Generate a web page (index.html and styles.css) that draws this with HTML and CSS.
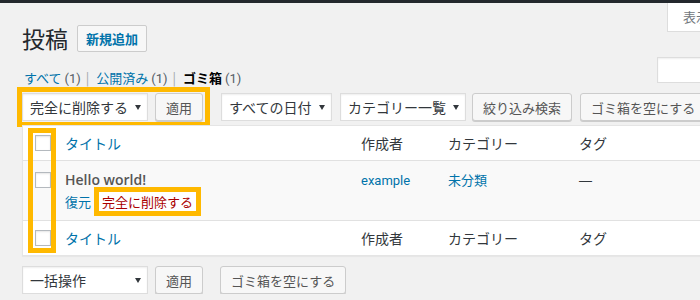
FILE: index.html
```html
<!DOCTYPE html>
<html lang="ja">
<head>
    <meta charset="utf-8">
    <title>投稿 ‹ ゴミ箱</title>
    <link rel="stylesheet" href="styles.css">
</head>
<body>
<div class="adminbar"></div>

<div class="page">
    <div class="page-head">
        <div class="head-left">
            <div class="title-row">
                <h1 class="page-title">投稿</h1>
                <a class="title-action" href="#">新規追加</a>
            </div>
            <ul class="subsubsub">
                <li><a href="#">すべて <span class="count">(1)</span></a><span class="sep">|</span></li>
                <li><a href="#">公開済み <span class="count">(1)</span></a><span class="sep">|</span></li>
                <li><a class="current" href="#">ゴミ箱 <span class="count">(1)</span></a></li>
            </ul>
        </div>
        <div class="head-right">
            <div class="screen-tab">表示オプション</div>
            <div class="search-input"></div>
        </div>
    </div>

    <div class="tablenav">
        <div class="bulk-actions mark">
            <div class="select select-bulk">完全に削除する<span class="arrow"></span></div>
            <button class="button">適用</button>
        </div>
        <div class="select select-date">すべての日付<span class="arrow"></span></div>
        <div class="select select-cat">カテゴリー一覧<span class="arrow"></span></div>
        <button class="button btn-filter">絞り込み検索</button>
        <button class="button">ゴミ箱を空にする</button>
    </div>

    <div class="table-wrap">
        <table class="posts">
            <colgroup>
                <col class="col-cb">
                <col class="col-title">
                <col class="col-author">
                <col class="col-cat">
                <col class="col-tags">
            </colgroup>
            <thead>
            <tr>
                <td class="check-column"><input type="checkbox"></td>
                <th><a href="#">タイトル</a></th>
                <th>作成者</th>
                <th>カテゴリー</th>
                <th>タグ</th>
            </tr>
            </thead>
            <tbody>
            <tr>
                <td class="check-column"><input type="checkbox"></td>
                <td>
                    <strong class="row-title">Hello world!</strong>
                    <div class="row-actions"><a href="#">復元</a><a class="delete mark-inline" href="#">完全に削除する</a></div>
                </td>
                <td><a class="latin" href="#">example</a></td>
                <td><a href="#">未分類</a></td>
                <td><span class="dash">—</span></td>
            </tr>
            </tbody>
            <tfoot>
            <tr>
                <td class="check-column"><input type="checkbox"></td>
                <th><a href="#">タイトル</a></th>
                <th>作成者</th>
                <th>カテゴリー</th>
                <th>タグ</th>
            </tr>
            </tfoot>
        </table>
        <!-- highlight around the checkbox column -->
        <div class="cb-mark"></div>
    </div>

    <div class="tablenav bottom">
        <div class="bulk-actions">
            <div class="select select-bulk">一括操作<span class="arrow"></span></div>
            <button class="button">適用</button>
        </div>
        <button class="button">ゴミ箱を空にする</button>
    </div>
</div>
</body>
</html>
```

FILE: styles.css
```css
:root {
    --bg: #f1f1f1;
    --text: #32373c;
    --muted: #555d66;
    --link: #0073aa;
    --danger: #a00;
    --border: #e5e5e5;
    --mark: #ffb900;
}

* {
    box-sizing: border-box;
}

html,
body {
    overflow: hidden;
}

body {
    margin: 0;
    width: 800px;
    background: var(--bg);
    color: var(--text);
    font-family: "Noto Sans CJK JP", sans-serif;
    font-size: 13px;
}

a {
    color: var(--link);
    text-decoration: none;
}

.latin {
    font-family: Roboto, "Noto Sans CJK JP", sans-serif;
    line-height: 1;
}

.adminbar {
    height: 3px;
    background: #23282d;
}

.page {
    padding: 0 20px 0 22px;
}

/* heading area */

.page-head {
    display: flex;
}

.head-left {
    padding-top: 22px;
}

.title-row {
    display: flex;
    align-items: center;
    height: 27px;
}

.page-title {
    margin: 0 9px 0 0;
    font-size: 23px;
    font-weight: 400;
    line-height: 27px;
    color: #23282d;
}

.title-action {
    padding: 0 8px;
    height: 27px;
    line-height: 25px;
    border: 1px solid #ccc;
    border-radius: 2px;
    background: #f7f7f7;
    font-weight: 700;
}

.subsubsub {
    display: flex;
    list-style: none;
    margin: 16px 0 0;
    padding: 0 0 0 2px;
    height: 20px;
    line-height: 20px;
}

.subsubsub .count {
    font-family: Roboto, sans-serif;
    line-height: 1;
    color: var(--muted);
}

.subsubsub .current {
    color: #000;
    font-weight: 700;
}

.subsubsub .current .count {
    font-weight: 400;
}

.sep {
    margin: 0 7px 0 5px;
    color: #a0a5aa;
}

.head-right {
    display: flex;
    flex-direction: column;
    align-items: flex-end;
    margin-left: auto;
    width: 123px;
}

.screen-tab {
    width: 113px;
    height: 29px;
    padding-left: 15px;
    line-height: 28px;
    background: #fff;
    border: 1px solid #ddd;
    border-top: none;
    color: #72777c;
    white-space: nowrap;
    overflow: hidden;
}

.search-input {
    width: 123px;
    height: 26px;
    margin-top: 25px;
    background: #fff;
    border: 1px solid #ddd;
    box-shadow: inset 0 1px 2px rgba(0, 0, 0, 0.07);
}

/* table navigation */

.tablenav {
    display: flex;
    align-items: center;
    margin-top: 4px;
}

.tablenav.bottom {
    margin-top: 10px;
}

.bulk-actions {
    display: flex;
    gap: 7px;
    margin-right: 17px;
}

.tablenav .bulk-actions.mark {
    padding: 1px 2px 1px 0;
    margin-right: 16px;
    outline: 5px solid var(--mark);
}

.select {
    display: flex;
    justify-content: space-between;
    align-items: center;
    height: 28px;
    padding: 0 6px 0 7px;
    background: #fff;
    border: 1px solid #ddd;
    box-shadow: inset 0 1px 2px rgba(0, 0, 0, 0.07);
    font-size: 14px;
    color: var(--text);
    white-space: nowrap;
}

.arrow {
    border-left: 3px solid transparent;
    border-right: 3px solid transparent;
    border-top: 5px solid #32373c;
}

.select-bulk {
    width: 126px;
}

.select-date {
    width: 111px;
    margin-right: 8px;
}

.select-cat {
    width: 126px;
    margin-right: 6px;
}

.button {
    height: 28px;
    padding: 0 10px;
    background: #f7f7f7;
    border: 1px solid #ccc;
    border-radius: 3px;
    box-shadow: 0 1px 0 #ccc;
    color: #555;
    font-family: "Noto Sans CJK JP", sans-serif;
    font-size: 13px;
    white-space: nowrap;
}

.btn-filter {
    margin-right: 8px;
}

/* posts table */

.table-wrap {
    position: relative;
    margin-top: 3px;
}

.posts {
    width: 758px;
    table-layout: fixed;
    border-spacing: 0;
    background: #fff;
    border: 1px solid var(--border);
    box-shadow: 0 1px 1px rgba(0, 0, 0, 0.04);
}

.col-cb { width: 32px; }
.col-title { width: 296px; }
.col-author { width: 87px; }
.col-cat { width: 131px; }

.posts th,
.posts td {
    padding: 7px 10px;
    vertical-align: top;
    text-align: left;
    line-height: 20px;
}

.posts th {
    font-size: 14px;
    font-weight: 400;
    color: var(--text);
}

.posts thead th,
.posts thead td {
    border-bottom: 1px solid #e1e1e1;
}

.posts tfoot th,
.posts tfoot td {
    border-top: 1px solid #e1e1e1;
}

.posts tbody tr {
    background: #f9f9f9;
}

.posts tbody td {
    padding: 9px 10px;
}

.posts .check-column {
    padding: 9px 0 0 12px;
}

.posts tbody .check-column {
    padding-top: 11px;
}

.check-column input {
    display: block;
    appearance: none;
    margin: 0;
    width: 16px;
    height: 16px;
    background: #fff;
    border: 1px solid #b4b9be;
    box-shadow: inset 0 1px 2px rgba(0, 0, 0, 0.1);
}

.row-title {
    display: block;
    font-family: "Open Sans", sans-serif;
    font-size: 14px;
    font-weight: 600;
    color: #555;
}

.row-actions {
    margin-top: 2px;
    line-height: 19px;
}

.row-actions .delete {
    color: var(--danger);
}

.mark-inline {
    margin-left: 3px;
    padding: 0 3px;
    background: #fff;
    border: 5px solid var(--mark);
}

.dash {
    font-family: "Liberation Sans", sans-serif;
    line-height: 1;
}

.cb-mark {
    position: absolute;
    left: 6px;
    top: 3px;
    width: 28px;
    height: 125px;
    border: 5px solid var(--mark);
}
```
